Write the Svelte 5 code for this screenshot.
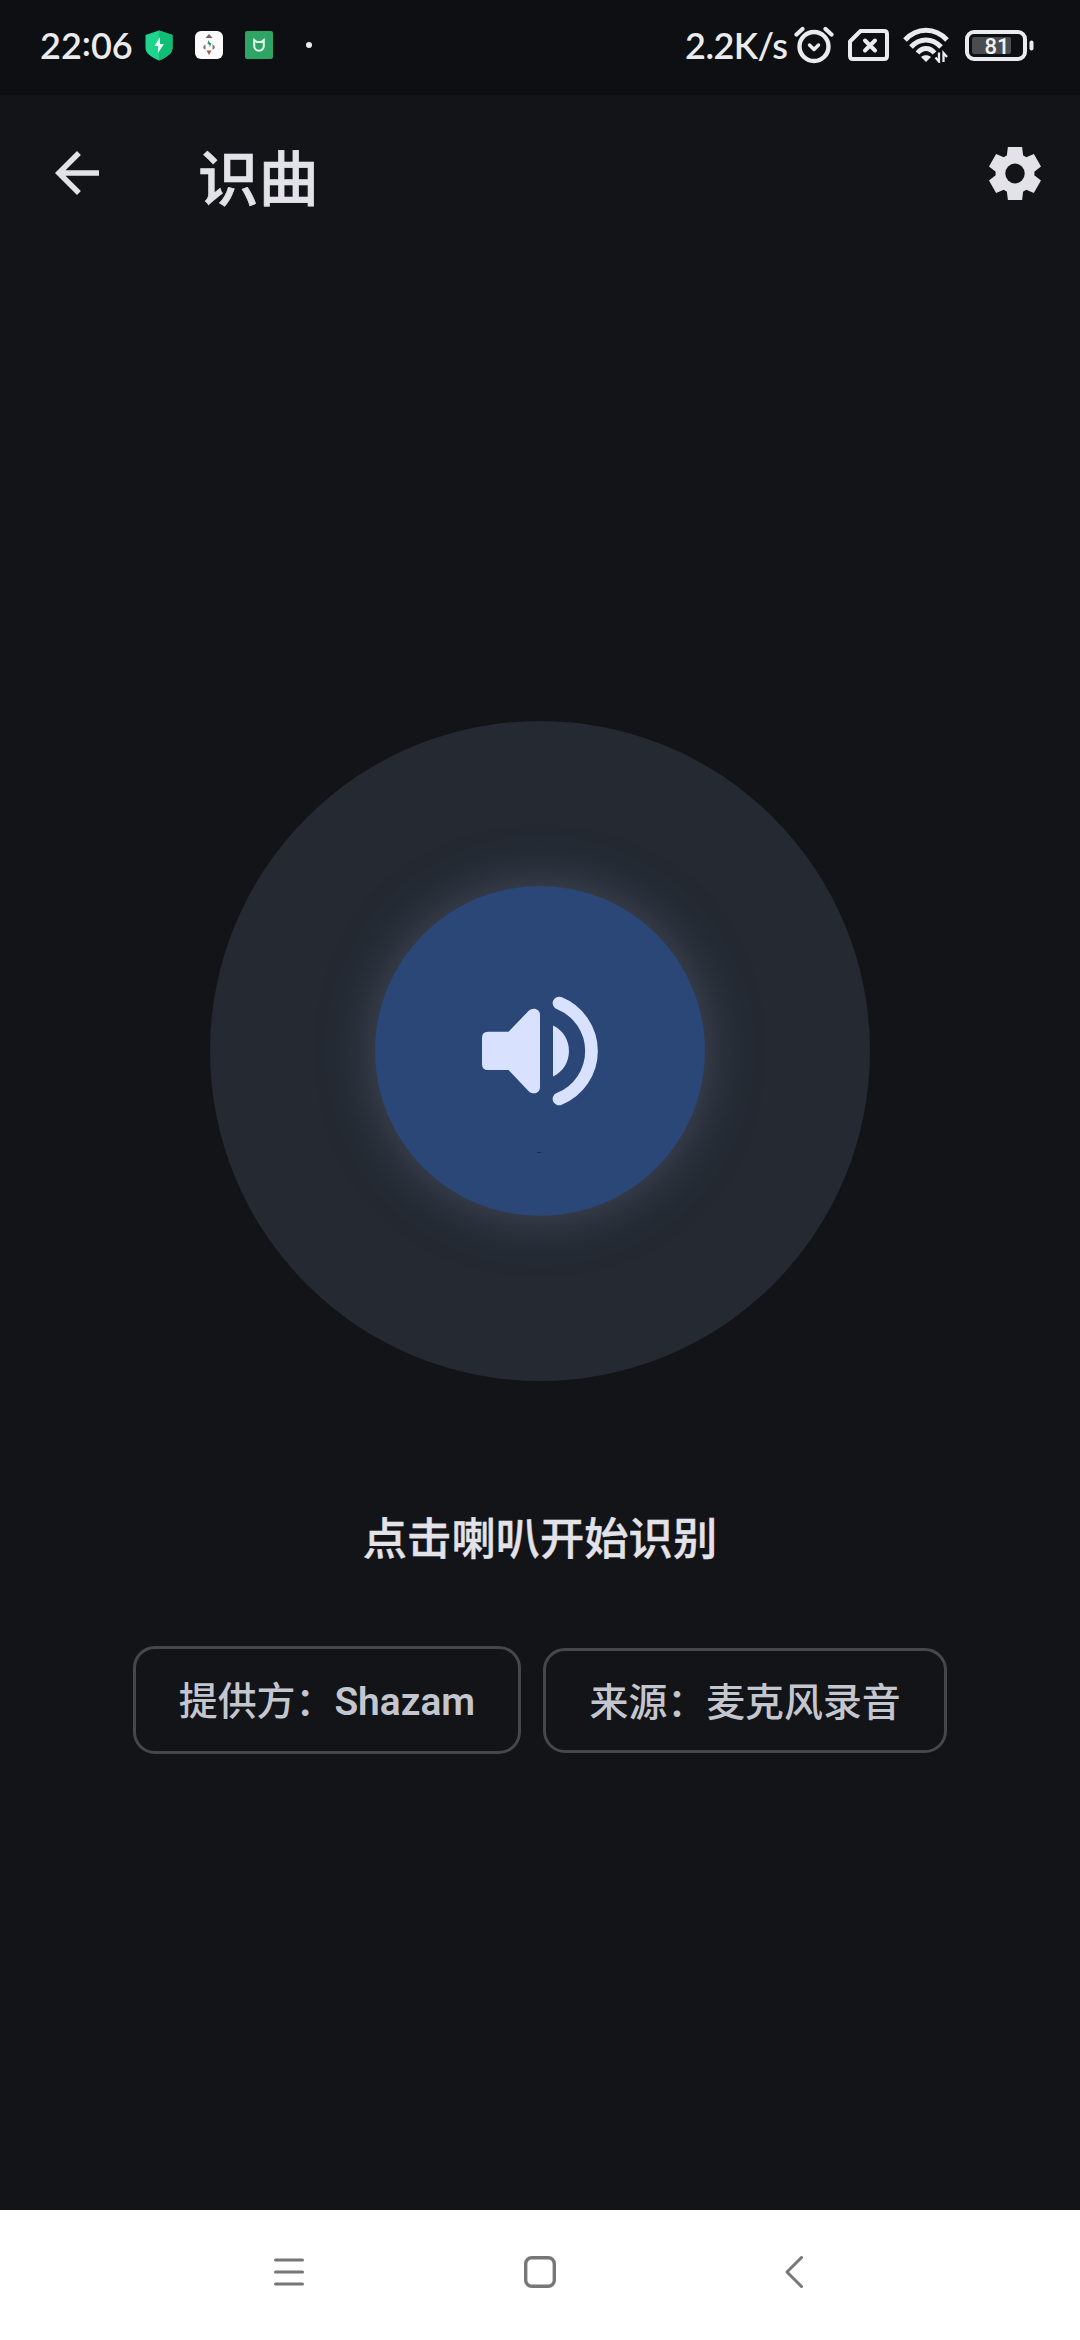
<script>
  const title = "识曲";
  const hint = "点击喇叭开始识别";
  const time = ["22", "06"];
  const speed = "2.2K/s";
  const battery = 81;
</script>

<style>
  :global(body) {
    margin: 0;
    background: #121418;
  }
  .screen {
    width: 1080px;
    height: 2340px;
    display: flex;
    flex-direction: column;
    overflow: hidden;
    background: #121418;
    color: #e3e2e8;
    font-family: Roboto, "Noto Sans CJK SC", sans-serif;
  }
  svg {
    display: block;
    flex: none;
  }
  button {
    margin: 0;
    padding: 0;
    border: none;
    background: none;
    color: inherit;
    font-family: inherit;
  }
  .status {
    height: 95px;
    flex: none;
    box-sizing: border-box;
    padding: 0 46px 5px 40px;
    display: flex;
    align-items: center;
    background: #0d0f12;
    color: #ebebed;
    font-family: Lato, sans-serif;
    font-size: 36px;
    font-weight: 600;
    line-height: 1;
  }
  .time {
    width: 105px;
  }
  .colon {
    line-height: 0;
    vertical-align: 3px;
  }
  .notices {
    display: flex;
    align-items: center;
    gap: 22px;
  }
  .dot {
    width: 6px;
    height: 6px;
    margin-left: 11px;
    border-radius: 50%;
    background: #ebebed;
  }
  .system {
    margin-left: auto;
    display: flex;
    align-items: center;
  }
  .speed {
    width: 109px;
    letter-spacing: -0.5px;
  }
  .app-bar {
    height: 156px;
    flex: none;
    box-sizing: border-box;
    padding: 0 39px 0 55px;
    display: flex;
    align-items: center;
  }
  h1 {
    flex: 1;
    margin: 15px 0 0 99px;
    font-size: 60.5px;
    line-height: 80px;
    font-weight: 500;
    -webkit-text-stroke: 0.6px #e3e2e8;
  }
  main {
    flex: 1;
    display: flex;
    flex-direction: column;
    align-items: center;
    padding-top: 470px;
  }
  .halo {
    width: 660px;
    height: 660px;
    flex: none;
    display: flex;
    align-items: center;
    justify-content: center;
    border-radius: 50%;
    background: #242932;
  }
  .listen {
    position: relative;
    width: 330px;
    height: 330px;
    display: flex;
    align-items: center;
    justify-content: center;
    border-radius: 50%;
    background: #2b4777;
    box-shadow: 0 0 48px 5px rgba(78, 88, 106, 0.65);
  }
  .listen::after {
    content: "";
    position: absolute;
    left: 162px;
    top: 266px;
    width: 4px;
    height: 1px;
    background: #1d2f52;
  }
  .hint {
    margin: 127px 0 0;
    font-size: 44.3px;
    line-height: 64px;
    font-weight: 500;
    -webkit-text-stroke: 0.4px #e3e2e8;
  }
  .chips {
    height: 108px;
    margin-top: 74px;
    display: flex;
    align-items: center;
    gap: 22px;
  }
  .chip {
    height: 105px;
    box-sizing: border-box;
    padding: 6px 43.5px 0;
    border: 3px solid #45474b;
    border-radius: 22px;
    color: #c4c6cf;
    font-size: 38.9px;
    font-weight: 500;
    line-height: 56px;
    white-space: nowrap;
  }
  .chip.provider {
    height: 108px;
    padding: 3px 43px 0;
  }
  .chip b {
    font-weight: 600;
  }
  .nav {
    height: 130px;
    flex: none;
    box-sizing: border-box;
    padding: 0 277px 7px 274px;
    display: flex;
    align-items: center;
    background: #fff;
  }
  .nav .home {
    margin: 0 229px 0 220px;
  }
</style>

<div class="screen">
  <div class="status">
    <span class="time">{time[0]}<span class="colon">:</span>{time[1]}</span>
    <div class="notices">
      <svg width="28" height="31" viewBox="0 0 28 31">
        <path d="M14 0.5 27.5 5v13c0 5-5 9-13.500 12.500C5.500 27 .5 23 .5 18V5z" fill="#1fd58c" />
        <path d="M14 .5 27.500 5v13c0 5-5 9-13.500 12.500z" fill="#10bd76" />
        <path d="M15 7 9.500 16H13v7l6-9h-4z" fill="#e6fff3" />
      </svg>
      <svg width="28" height="28" viewBox="0 0 28 28">
        <rect width="28" height="28" rx="6" fill="#fafafa" />
        <path d="m14 3 3.500 4h-7z" fill="#686868" />
        <path d="m11.500 19.500h5L14 24z" fill="#a85a4b" />
        <path d="M10.500 13.500v5C7.500 18 7.500 15 10.500 13.500zM17.500 13.500v5c3-.5 3-3.500 0-5z" fill="#777" />
        <path d="m13.500 9-1 4 2 .5v3l2-4-2-1z" fill="#328b68" />
      </svg>
      <svg width="28" height="28" viewBox="0 0 28 28">
        <rect width="28" height="28" rx="2" fill="#2fa565" />
        <path d="M9.200 9v6c0 6.200 9.600 6.200 9.600 0V9l-2.600 2h-4.400z" fill="none" stroke="#e5f7ed" stroke-width="2" />
      </svg>
      <span class="dot"></span>
    </div>
    <div class="system">
      <span class="speed">{speed}</span>
      <svg width="40" height="38" viewBox="0 0 40 38" fill="none" stroke="#ebebed" stroke-linecap="round" stroke-linejoin="round">
        <circle cx="20" cy="20.500" r="14.500" stroke-width="4.400" />
        <path d="m2.500 8.500 6-5.500M31.500 3l6 5.500" stroke-width="4.200" />
        <path d="m15.500 19 4.500 4.500 4.500-4.500" stroke-width="3.500" />
      </svg>
      <svg style="margin-left: 14px" width="41" height="32" viewBox="0 0 41 32" fill="none" stroke="#ebebed" stroke-linecap="round" stroke-linejoin="round">
        <path d="M12.500 2H36q3 0 3 3v22q0 3-3 3H5q-3 0-3-3V12.500z" stroke-width="4" />
        <path d="m17 11.500 10 10M27 11.500l-10 10" stroke-width="4" />
      </svg>
      <svg style="margin-left: 14px" width="47" height="36" viewBox="0 0 47 36" fill="none" stroke="#ebebed">
        <path d="M2 13c12-13 30-13 42 0M8 20c8.500-9.500 21.500-9.500 30 0M14.500 26c5-6 12-6 17 0" stroke-width="5" />
        <path d="m18 30 5 5 5-5c-2.500-2.500-7.500-2.500-10 0z" fill="#ebebed" stroke="none" />
        <path d="M36 25.500v9l-3.500-4M40.500 35v-9l3.500 4" stroke-width="2.300" />
      </svg>
      <svg style="margin-left: 15px" width="69" height="31" viewBox="0 0 69 31">
        <rect x="2" y="2" width="58" height="27" rx="7" fill="none" stroke="#ebebed" stroke-width="4" />
        <rect x="7" y="7" width="39" height="17" rx="2" fill="#4b4c4f" />
        <rect x="64.500" y="10.500" width="4" height="10" rx="2" fill="#ebebed" />
        <text x="32" y="23.500" text-anchor="middle" font-family="Roboto, sans-serif" font-size="22" font-weight="500" fill="#f2f2f2">{battery}</text>
      </svg>
    </div>
  </div>

  <header class="app-bar">
    <button aria-label="back">
      <svg width="44" height="44" viewBox="0 0 16 16" fill="#e3e2e8">
        <path d="M16 7H3.830l5.590-5.590L8 0 0 8l8 8 1.410-1.410L3.830 9H16z" />
      </svg>
    </button>
    <h1>{title}</h1>
    <button aria-label="settings">
      <svg width="52" height="53" viewBox="1.950 2 20.100 20" preserveAspectRatio="none" fill="#e3e2e8">
        <path
          d="M9.250 22l-.4-3.200q-.325-.125-.612-.3t-.563-.375L4.700 19.375l-2.750-4.750 2.575-1.950Q4.500 12.500 4.500 12.337v-.675q0-.162.025-.337L1.950 9.375l2.750-4.750 2.975 1.250q.275-.2.575-.375t.6-.3l.4-3.200h5.500l.4 3.200q.325.125.613.3t.562.375l2.975-1.250 2.750 4.750-2.575 1.950q.025.175.025.338v.674q0 .163-.05.338l2.575 1.950-2.750 4.750-2.950-1.250q-.275.2-.575.375t-.6.3l-.4 3.200z" />
        <circle cx="12" cy="12" r="3.750" fill="#121418" />
      </svg>
    </button>
  </header>

  <main>
    <div class="halo">
      <button class="listen" aria-label={hint}>
        <svg width="120" height="112" viewBox="0 0 120 112" fill="#d8e2ff">
          <path d="M8 36.700h20.500L48.700 15.800c4-4 11.300-2 11.300 4v72.400c0 6-7.300 8-11.300 4L28.500 75H8q-6 0-6-6V42.700q0-6 6-6z" />
          <path d="M73 30.500c21.300 10 21.300 41 0 51z" />
          <path d="M79 8a51.700 51.700 0 0 1 0 96" fill="none" stroke="#d8e2ff" stroke-width="12.700" stroke-linecap="round" />
        </svg>
      </button>
    </div>
    <p class="hint">{hint}</p>
    <div class="chips">
      <button class="chip provider">提供方：<b>Shazam</b></button>
      <button class="chip">来源：麦克风录音</button>
    </div>
  </main>

  <nav class="nav">
    <svg width="30" height="32" viewBox="0 0 30 32" stroke="#777" stroke-width="3" stroke-linecap="round">
      <path d="M1.500 4h27M1.500 16h27M1.500 28h27" />
    </svg>
    <svg class="home" width="32" height="32" viewBox="0 0 32 32">
      <rect x="1.700" y="1.700" width="28.600" height="28.600" rx="6" fill="none" stroke="#777" stroke-width="3.400" />
    </svg>
    <svg width="18" height="32" viewBox="0 0 18 32" fill="none" stroke="#777" stroke-width="3" stroke-linecap="round" stroke-linejoin="round">
      <path d="M16.500 1.500 2 16l14.500 14.500" />
    </svg>
  </nav>
</div>
